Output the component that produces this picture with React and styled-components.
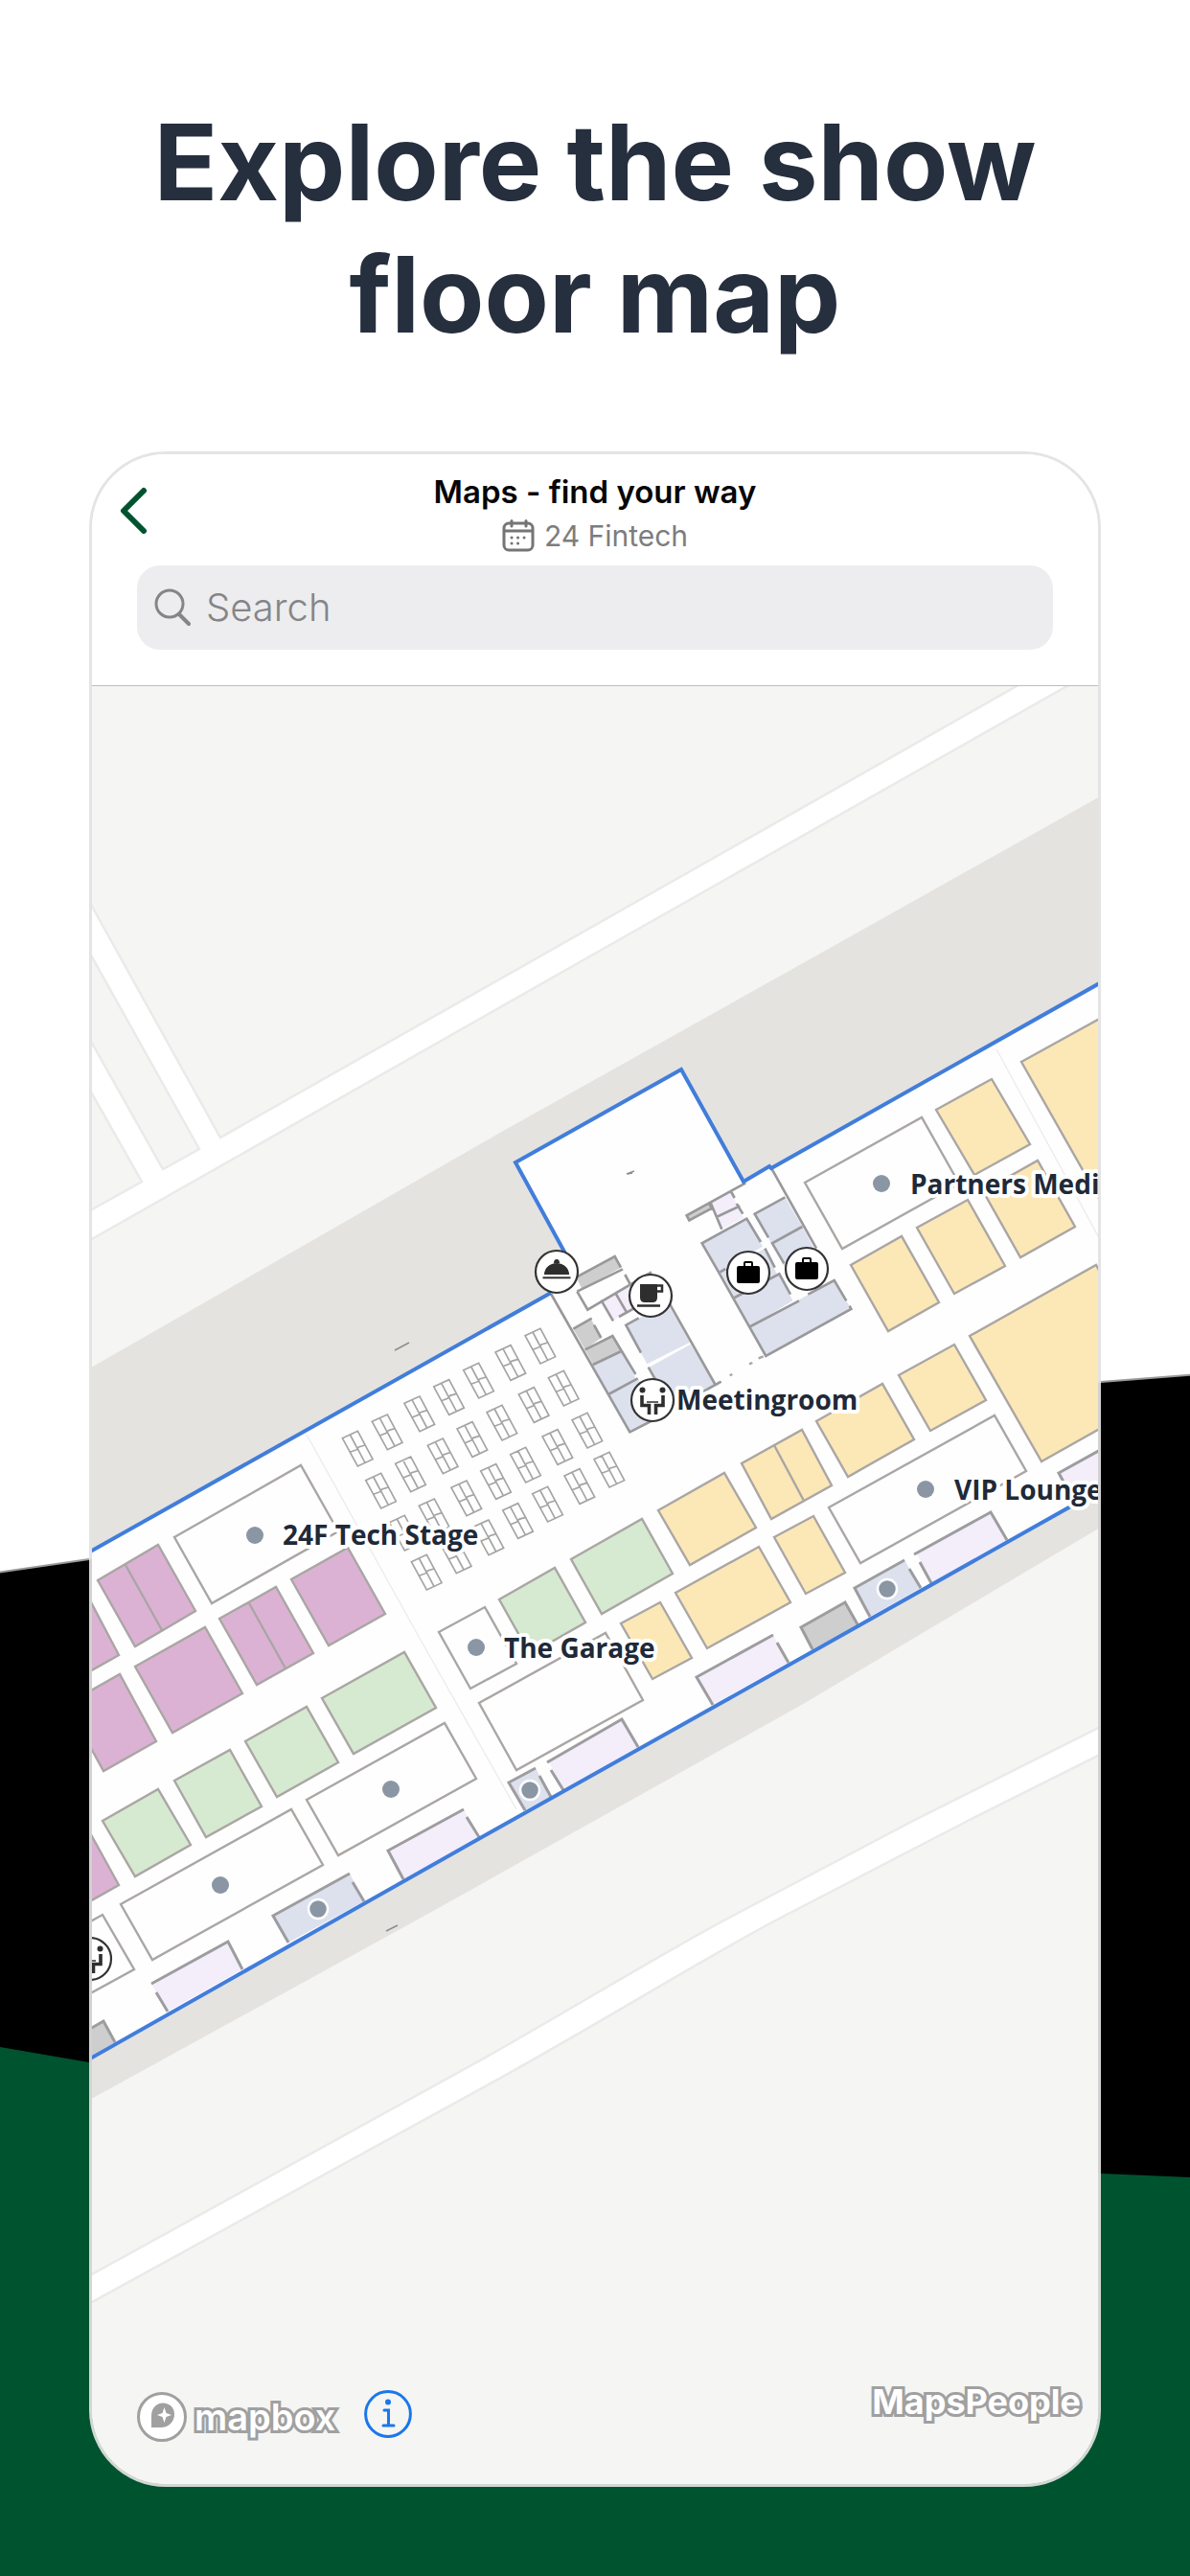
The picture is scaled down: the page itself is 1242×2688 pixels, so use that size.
import React from "react";
import styled, { createGlobalStyle } from "styled-components";

const GlobalStyle = createGlobalStyle`
  *, *::before, *::after { box-sizing: border-box; }
  body {
    margin: 0;
    background: #ffffff;
    font-family: Inter, "Liberation Sans", sans-serif;
  }
`;

const Page = styled.main`
  position: relative;
  min-height: 100vh;
  padding: 100px 93px 93px;
  overflow: hidden;
`;

const Backdrop = styled.svg`
  position: absolute;
  inset: 0;
  width: 100%;
  height: 100%;
`;

const Headline = styled.h1`
  position: relative;
  margin: 0 0 95px;
  color: #262f3e;
  font-size: 110px;
  font-weight: 700;
  line-height: 138px;
  text-align: center;
`;

const Phone = styled.section`
  position: relative;
  overflow: hidden;
  border: 3px solid rgba(225, 226, 225, 0.93);
  border-radius: 80px;
  background: #f5f5f3;
  background-clip: padding-box;
`;

const Header = styled.header`
  padding-bottom: 37px;
  border-bottom: 1px solid #bdbdbd;
  background: #ffffff;
`;

const TopBar = styled.div`
  display: grid;
  grid-template-columns: 100px 1fr 100px;
  align-items: center;
  height: 116px;
`;

const BackButton = styled.button`
  display: flex;
  padding: 0 0 0 28px;
  border: 0;
  background: none;
  cursor: pointer;
`;

const Titles = styled.div`
  padding-top: 8px;
  text-align: center;
`;

const ScreenTitle = styled.h2`
  margin: 0;
  color: #060606;
  font-size: 33px;
  font-weight: 600;
  line-height: 46px;
`;

const EventName = styled.p`
  display: flex;
  align-items: center;
  justify-content: center;
  gap: 10px;
  margin: 0;
  color: #7d7d7d;
  font-size: 30px;
  font-weight: 400;
  line-height: 46px;
`;

const SearchBox = styled.label`
  display: flex;
  align-items: center;
  gap: 16px;
  height: 88px;
  margin: 0 47px;
  padding: 0 18px;
  border-radius: 24px;
  background: #ededef;
`;

const SearchInput = styled.input`
  flex: 1;
  min-width: 0;
  padding: 0;
  border: 0;
  outline: 0;
  background: none;
  color: #3c3c43;
  font: 300 40px/48px Inter, "Liberation Sans", sans-serif;
  &::placeholder { color: #858588; opacity: 1; }
`;

const MapArea = styled.div`
  position: relative;
  background: #f5f5f3;
`;

const MapCanvas = styled.svg`
  display: block;
  width: 100%;
  height: auto;
`;

const MapLabel = styled.text`
  fill: #202938;
  stroke: #ffffff;
  stroke-width: 8px;
  stroke-linejoin: round;
  paint-order: stroke;
  font-family: "Open Sans", "Noto Sans", sans-serif;
  font-size: 28px;
  font-weight: 700;
`;

const Attribution = styled.footer`
  position: absolute;
  right: 18px;
  bottom: 42px;
  left: 47px;
  display: flex;
  align-items: flex-start;
`;

const Brand = styled.a`
  display: flex;
  align-items: center;
  gap: 8px;
  height: 56px;
  color: #ffffff;
  font-weight: 600;
  text-decoration: none;
  -webkit-text-stroke: 6px #a0a0a0;
  paint-order: stroke;
  stroke-linejoin: round;
  font-size: ${(p) => p.$size}px;

  svg { paint-order: normal; }
`;

const PartnerBrand = styled(Brand)`
  height: 24px;
  margin-left: auto;
  font-weight: 700;
`;

const InfoButton = styled.button`
  display: flex;
  margin: 0 0 0 30px;
  padding: 0;
  border: 0;
  background: none;
  cursor: pointer;
`;

const FILL = {
  pink: "#dbb2d4",
  yellow: "#fce8b6",
  green: "#d5ead0",
  white: "#fefefe",
  blue: "#dde1ed",
  lilac: "#f3eefa",
  grey: "#cecece",
};

// Each stand: kind, left corner, top corner, bottom corner.
const STANDS = [
  ["white", 840, 1234, 962, 1166, 879, 1303],
  ["yellow", 977, 1158, 1035, 1126, 1017, 1226],
  ["yellow", 1066, 1108, 1162, 1055, 1150, 1256],
  ["yellow", 1026, 1243, 1083, 1211, 1065, 1312],
  ["yellow", 957, 1281, 1010, 1252, 996, 1350],
  ["yellow", 888, 1320, 941, 1290, 927, 1389],
  ["yellow", 1012, 1394, 1144, 1320, 1087, 1525],
  ["yellow", 938, 1435, 996, 1403, 971, 1493],
  ["yellow", 852, 1483, 921, 1444, 885, 1541],
  ["yellow", 774, 1527, 837, 1492, 805, 1585],
  ["white", 865, 1573, 1038, 1477, 898, 1631],
  ["yellow", 808, 1604, 849, 1582, 841, 1663],
  ["yellow", 687, 1576, 756, 1537, 720, 1633],
  ["yellow", 705, 1662, 792, 1614, 738, 1720],
  ["yellow", 648, 1694, 689, 1672, 681, 1752],
  ["green", 596, 1627, 670, 1585, 628, 1684],
  ["green", 521, 1669, 579, 1636, 553, 1726],
  ["white", 458, 1703, 506, 1677, 491, 1762],
  ["white", 500, 1777, 632, 1704, 539, 1847],
  ["white", 182, 1604, 314, 1529, 221, 1673],
  ["pink", 102, 1649, 165, 1612, 141, 1718],
  ["pink", 20, 1687, 84, 1651, 60, 1763],
  ["pink", 141, 1739, 214, 1698, 180, 1808],
  ["pink", 229, 1689, 288, 1656, 268, 1758],
  ["pink", 304, 1648, 363, 1615, 343, 1717],
  ["pink", 70, 1778, 125, 1747, 108, 1848],
  ["pink", 22, 1934, 86, 1898, 60, 2003],
  ["green", 107, 1900, 165, 1867, 141, 1958],
  ["green", 182, 1858, 240, 1826, 215, 1917],
  ["green", 256, 1817, 320, 1781, 289, 1875],
  ["green", 336, 1772, 422, 1724, 369, 1830],
  ["white", 320, 1878, 464, 1798, 353, 1936],
  ["white", 126, 1987, 304, 1888, 159, 2045],
  ["white", 47, 2031, 107, 1998, 80, 2088],
];

const DIVIDERS = "M808 1508 L839 1566 M131 1633 L169 1701 M260 1673 L298 1741";

// Rooms along the lower facade: fill, area, walls.
const FACADE_ROOMS = [
  ["lilac", "573,1839 649,1794 666,1823 588,1868", "M571 1839 L649 1794 L666 1823 M575 1847 L588 1868"],
  ["blue", "531,1860 559,1845 575,1875 548,1889", "M548 1889 L531 1860 L559 1845 M563 1853 L575 1875"],
  ["lilac", "727,1750 807,1706 823,1735 744,1779", "M744 1779 L727 1750 L807 1706 M811 1714 L823 1735"],
  ["lilac", "405,1931 484,1888 500,1917 421,1961", "M421 1961 L405 1931 L484 1888 M487 1896 L500 1917"],
  ["blue", "285,1999 365,1955 380,1984 301,2027", "M301 2027 L285 1999 L365 1955 M368 1964 L380 1984"],
  ["lilac", "158,2070 238,2026 253,2055 175,2099", "M158 2070 L238 2026 L253 2055 M163 2079 L175 2099"],
  ["grey", "80,2125 108,2109 120,2131 92,2147", "M80 2125 L108 2109 L120 2131"],
  ["grey", "836,1698 882,1672 895,1695 848,1721", "M848 1721 L836 1698 L882 1672 L895 1695"],
  ["blue", "892,1657 944,1628 961,1657 908,1687", "M908 1687 L892 1657 L944 1628 M949 1637 L961 1657"],
  ["lilac", "957,1621 1034,1578 1051,1607 972,1652", "M954 1622 L1034 1578 L1051 1607 M960 1630 L972 1652"],
  ["lilac", "1105,1537 1150,1512 1166,1545 1122,1567", "M1150 1512 L1105 1537 L1112 1550"],
];

// Central block, drawn in thirds of a map unit.
const CORE_ROOMS = [
  ["grey", "245,758 365,693 384,728 262,796"],
  ["lilac", "322,830 366,806 398,868 360,895"],
  ["lilac", "366,806 412,783 445,845 402,868"],
  ["grey", "235,920 290,888 322,948 272,985"],
  ["grey", "272,985 358,942 385,990 297,1032"],
  ["blue", "297,1032 385,990 430,1075 345,1125"],
  ["blue", "345,1125 437,1075 500,1195 412,1243"],
  ["blue", "400,908 530,840 600,962 466,1030"],
  ["blue", "470,1042 602,968 678,1093 540,1165"],
  ["grey", "590,565 660,527 668,543 598,580"],
  ["lilac", "665,525 730,492 750,538 685,570"],
  ["lilac", "683,570 750,538 768,572 700,608"],
  ["blue", "638,652 778,575 828,662 690,742"],
  ["blue", "695,742 835,668 872,748 740,822"],
  ["blue", "740,822 880,748 922,832 790,912"],
  ["blue", "790,912 1052,768 1105,858 838,1005"],
  ["blue", "803,560 898,508 952,600 855,652"],
  ["blue", "858,652 952,600 1000,690 905,745"],
];

const CORE_WALLS =
  "M165 810 L412 1243 L490 1203 M245 758 L365 693 L384 728 M247 803 L390 733 M397 750 L412 778 " +
  "M247 803 L280 860 L480 742 M322 830 L360 895 M366 806 L402 868 M378 882 L445 845 " +
  "M235 920 L293 887 M300 908 L322 948 M272 985 L358 942 L430 1062 M297 1032 L385 990 M345 1125 L437 1075 " +
  "M447 995 L400 908 L440 886 M530 830 L680 1095 L640 1117 M680 1095 L698 1085 M470 1040 L497 1087 " +
  "M775 463 L590 565 L598 580 L668 543 L660 527 M665 525 L700 608 M683 570 L757 535 M730 492 L740 510 M746 528 L766 560 " +
  "M856 418 L996 668 M690 742 L638 652 L778 575 L822 648 M690 742 L838 1005 L1105 858 L1100 848 " +
  "M695 742 L712 732 M835 668 L866 728 M740 822 L880 748 L915 812 M790 912 L942 832 " +
  "M898 508 L803 560 L846 634 M952 600 L858 652 L895 715 M970 812 L1052 768 L1090 832";

const TABLE_ROWS = [[99, 455], [172, 587], [246, 719], [315, 842]];
const TABLE_STEPS = [[0, 0], [93, -52], [194, -109], [286, -161], [379, -213], [479, -269], [572, -321]];

const DOTS = [
  [266, 1602], [497, 1719], [966, 1554], [920, 1235], [408, 1867], [230, 1967],
  [332, 1992, true], [553, 1868, true], [926, 1658, true],
];

const LABELS = [
  [950, 1246, "Partners Medi"],
  [706, 1471, "Meetingroom"],
  [996, 1565, "VIP Lounge"],
  [295, 1612, "24F Tech Stage"],
  [526, 1730, "The Garage"],
];

const Stand = ({ kind, left, top, bottom }) => {
  const right = [top[0] + bottom[0] - left[0], top[1] + bottom[1] - left[1]];
  return (
    <polygon
      points={[left, top, right, bottom].join(" ")}
      fill={FILL[kind]}
      stroke="#aaa6a4"
      strokeWidth="2.4"
    />
  );
};

const Pin = ({ x, y, children }) => (
  <g transform={`translate(${x} ${y})`}>
    <circle r="22" fill="#ffffff" stroke="#333333" strokeWidth="2.2" />
    {children}
  </g>
);

const Suitcase = () => (
  <>
    <rect x="-12" y="-7" width="24" height="18" rx="2" fill="#000000" />
    <rect x="-4" y="-11" width="8" height="6" rx="1" fill="none" stroke="#000000" strokeWidth="2" />
  </>
);

const Meeting = () => (
  <g fill="none" stroke="#2e2e2e" strokeWidth="3.6">
    <circle cx="-10.5" cy="-10.5" r="3" fill="#2e2e2e" stroke="none" />
    <circle cx="10.5" cy="-10.5" r="3" fill="#2e2e2e" stroke="none" />
    <path d="M-11 -5 V5.500 H-3.500 V15 M11 -5 V5.500 H3.500 V15" />
    <path d="M-6 2 H6" strokeWidth="1.500" />
  </g>
);

const FloorMap = () => (
  <MapCanvas viewBox="96 716 1050 1876" role="img" aria-label="Show floor map">
    <rect x="90" y="710" width="1070" height="1890" fill="#f5f5f3" />
    <g fill="#ffffff" stroke="#eaeaea" strokeWidth="2.5">
      <path d="M80 1271 L148 1233 L80 1113 V1060 L170 1220 L208 1199 L85 979 V926 L230 1187 L1061 716 L1140 671 V701 L612 1000 L80 1302 Z" />
      <path d="M80 2382 L510 2145 C590 2100 700 2033 763 2000 L953 1900 L1160 1796 V1825 L1010 1900 L817 2000 C740 2040 620 2115 510 2175 L80 2411 Z" />
    </g>
    <polygon points="90,1430 520,1183 847,1000 1150,830 1150,1593 840,1777 445,1998 90,2193" fill="#e4e3e0" />
    <polygon
      points="80,1627 575,1349 601,1334 538,1213 711,1116 776,1233 803,1217 805,1219 1160,1019 1160,1548 840,1728 510,1913 80,2156"
      fill="#fefefe"
    />
    <path d="M320 1497 L436 1706 L539 1888 M1040 1095 L1150 1297" fill="none" stroke="#ededed" strokeWidth="1.500" />
    <path d="M412 1409 L427 1401 M403 2015 L415 2009 M654 1225 L662 1222 M655 1225 L660 1224" stroke="#8d8d8d" strokeWidth="1.500" />

    {STANDS.map(([kind, ax, ay, bx, by, dx, dy]) => (
      <Stand key={`${ax}-${ay}`} kind={kind} left={[ax, ay]} top={[bx, by]} bottom={[dx, dy]} />
    ))}
    <path d={DIVIDERS} stroke="#aaa6a4" strokeWidth="2.4" />

    {FACADE_ROOMS.map(([kind, area, walls]) => (
      <g key={area}>
        <polygon points={area} fill={FILL[kind]} />
        <path d={walls} fill="none" stroke="#9d9da0" strokeWidth="3" />
      </g>
    ))}

    <g transform="translate(340 1360) scale(0.33333)" fill="none" stroke="#a4a4a4" strokeWidth="5">
      {TABLE_ROWS.flatMap(([rx, ry]) =>
        TABLE_STEPS.map(([sx, sy]) => (
          <path
            key={`${rx + sx}-${ry + sy}`}
            transform={`translate(${rx + sx} ${ry + sy})`}
            d="M-47 -33 L1 -55 L48 33 L1 55 Z M-23 -44 L-4 -8 L5 8 L24 44 M-23 11 L-2 3 L4 -5 L24 -11"
          />
        ))
      )}
    </g>

    <g transform="translate(520 1080) scale(0.33333)">
      {CORE_ROOMS.map(([kind, area]) => (
        <polygon key={area} points={area} fill={FILL[kind]} />
      ))}
      <path d={CORE_WALLS} fill="none" stroke="#99999c" strokeWidth="8" />
      <path d="M725 1066 L733 1062 M786 1030 L796 1026 M815 1012 L830 1006" stroke="#a5a5a8" strokeWidth="7" />
    </g>

    <g fill="none" stroke="#417ddb" strokeWidth="4">
      <path d="M80 1627 L575 1349 M590 1308 L538 1213 L711 1116 L776 1233 L803 1217 L805 1219 L1160 1019" />
      <path d="M80 2156 L510 1913 L840 1728 L1160 1548" />
    </g>

    {DOTS.map(([x, y, ringed]) => (
      <circle
        key={`${x}-${y}`}
        cx={x}
        cy={y}
        r={ringed ? 10 : 9}
        fill="#8a96a3"
        stroke={ringed ? "#ffffff" : "none"}
        strokeWidth="2.5"
      />
    ))}

    <Pin x={581} y={1327}>
      <path d="M-13 3 A13 12 0 0 1 13 3 Z M-3 -9 A3 4 0 0 1 3 -9 Z" fill="#2e2e2e" />
      <path d="M-14.500 6.300 H14.500" stroke="#2e2e2e" strokeWidth="2" />
    </Pin>
    <Pin x={679} y={1352}>
      <path d="M-11 -12 H7 V2 Q7 7 2 7 H-6 Q-11 7 -11 2 Z" fill="#2e2e2e" />
      <path d="M7 -10.500 H12 V-4.500 H7 M-14 10.500 H10" fill="none" stroke="#2e2e2e" strokeWidth="2.5" />
    </Pin>
    <Pin x={781} y={1328}><Suitcase /></Pin>
    <Pin x={842} y={1324}><Suitcase /></Pin>
    <Pin x={681} y={1461}><Meeting /></Pin>
    <Pin x={94} y={2044}><Meeting /></Pin>

    {LABELS.map(([x, y, name]) => (
      <MapLabel key={name} x={x} y={y}>{name}</MapLabel>
    ))}
  </MapCanvas>
);

const BackIcon = () => (
  <svg width="32" height="50" viewBox="0 0 32 50" fill="none" stroke="#00532f" strokeWidth="6" strokeLinecap="round" strokeLinejoin="round" aria-hidden="true">
    <path d="M26 5 L5 26 L26 47" />
  </svg>
);

const CalendarIcon = () => (
  <svg width="34" height="34" viewBox="0 0 34 34" fill="none" stroke="#757575" strokeWidth="3" strokeLinecap="round" aria-hidden="true">
    <rect x="2" y="4" width="30" height="28" rx="5" />
    <path d="M3 12 H31 M10 1.500 V7 M25 1.500 V7" />
    <path d="M10 19 h.1 M16.500 19 h.1 M23 19 h.1 M10 25 h.1 M16.500 25 h.1" />
  </svg>
);

const SearchIcon = () => (
  <svg width="38" height="40" viewBox="0 0 38 40" fill="none" stroke="#858588" strokeLinecap="round" aria-hidden="true">
    <circle cx="16" cy="16" r="14" strokeWidth="3" />
    <path d="M26 27 L36 37" strokeWidth="4" />
  </svg>
);

const MapboxMark = () => (
  <svg width="52" height="52" viewBox="0 0 52 52" aria-hidden="true">
    <circle cx="26" cy="26" r="24.500" fill="#ffffff" stroke="#a0a0a0" strokeWidth="3" />
    <path d="M15 37 V25 C15 16 21 11.500 27 11.500 C34 11.500 39 16.500 39 23 C39 31 33 37 25 37 Z" fill="#a0a0a0" />
    <path d="M28.500 16 L30.500 22 L36 24 L30.500 26 L28.500 32 L26.500 26 L21 24 L26.500 22 Z" fill="#ffffff" />
  </svg>
);

const InfoIcon = () => (
  <svg width="50" height="50" viewBox="0 0 50 50" fill="none" stroke="#1a77ec" strokeWidth="3" strokeLinecap="round" aria-hidden="true">
    <circle cx="25" cy="25" r="23.400" />
    <path d="M21 21 H25.500 V37 M20 37 H31" />
    <circle cx="25" cy="12.500" r="3" fill="#1a77ec" stroke="none" />
  </svg>
);

export default function App() {
  return (
    <Page>
      <GlobalStyle />
      <Backdrop viewBox="0 0 1242 2688" preserveAspectRatio="none" aria-hidden="true">
        <polygon points="-10,1642 93,1627 1149,1442 1252,1434 1252,2700 -10,2700" fill="#000000" stroke="#9a9a9a" strokeWidth="2" />
        <polygon points="0,2136 93,2152 1149,2268 1242,2272 1242,2688 0,2688" fill="#00532f" />
      </Backdrop>
      <Headline>
        Explore the show
        <br />
        floor map
      </Headline>
      <Phone>
        <Header>
          <TopBar>
            <BackButton type="button" aria-label="Back"><BackIcon /></BackButton>
            <Titles>
              <ScreenTitle>Maps - find your way</ScreenTitle>
              <EventName><CalendarIcon />24 Fintech</EventName>
            </Titles>
          </TopBar>
          <SearchBox>
            <SearchIcon />
            <SearchInput type="search" placeholder="Search" aria-label="Search" />
          </SearchBox>
        </Header>
        <MapArea>
          <FloorMap />
          <Attribution>
            <Brand href="#mapbox" $size={38}>
              <MapboxMark />
              mapbox
            </Brand>
            <InfoButton type="button" aria-label="Map information"><InfoIcon /></InfoButton>
            <PartnerBrand href="#mapspeople" $size={36}>
              MapsPeople
            </PartnerBrand>
          </Attribution>
        </MapArea>
      </Phone>
    </Page>
  );
}
